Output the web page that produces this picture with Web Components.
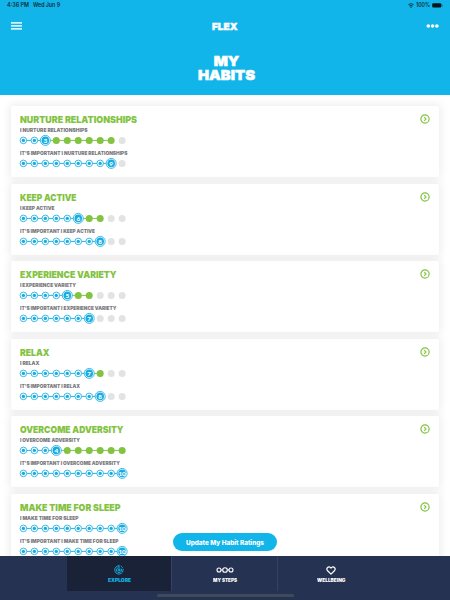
<!DOCTYPE html>
<html lang="en">
<head>
<meta charset="utf-8">
<title>My Habits</title>
<style>
  html, body { margin: 0; height: 100%; overflow: hidden; }
  body { font-family: Inter, "Liberation Sans", sans-serif; background: #fff; }
</style>
</head>
<body>
<habits-app></habits-app>

<script>
/**
 * FitText
 * - Stretches or condenses its text to `width` pixels
 */
class FitText extends HTMLElement {
  constructor() {
    super();
    this.attachShadow({ mode: "open" });
    this.shadowRoot.innerHTML = `
      <style>
        :host { display: block; white-space: nowrap; }
        span { display: inline-block; transform-origin: 0 50%; vertical-align: top; }
      </style>
      <span><slot></slot></span>
    `;
  }

  connectedCallback() {
    const span = this.shadowRoot.querySelector("span");
    const width = Number(this.getAttribute("width"));
    const scale = width / span.getBoundingClientRect().width;
    span.style.transform = `scaleX(${scale})`;
    this.style.width = `${width}px`;
  }
}

/**
 * RatingTrack
 * - Attributes: `value` (numbered marker), `goal` (last green dot)
 */
class RatingTrack extends HTMLElement {
  constructor() {
    super();
    this.attachShadow({ mode: "open" });
  }

  connectedCallback() {
    const value = Number(this.getAttribute("value"));
    const goal = Number(this.getAttribute("goal") || value);
    const x = (n) => 6.4 + (n - 1) * 10.97;
    let dots = "";

    for (let n = 1; n <= 10; n++) {
      if (n < value) {
        dots += `<circle class="ring" cx="${x(n)}" cy="6.4" r="3.3"/><circle class="blue" cx="${x(n)}" cy="6.4" r="1.7"/>`;
      } else if (n === value) {
        dots += `
          <circle class="ring" cx="${x(n)}" cy="6.4" r="5"/>
          <circle class="blue" cx="${x(n)}" cy="6.4" r="3.8"/>
          <text x="${x(n)}" y="8.7">${n}</text>`;
      } else {
        dots += `<circle class="${n <= goal ? "green" : "grey"}" cx="${x(n)}" cy="6.4" r="3.5"/>`;
      }
    }

    this.shadowRoot.innerHTML = `
      <style>
        :host { display: block; height: 12px; margin-left: -3px; }
        svg { display: block; overflow: visible; }
        .ring { fill: #fff; stroke: #25b3e4; stroke-width: 0.9; }
        .blue { fill: #18ade2; }
        .green { fill: #82c341; }
        .grey { fill: #e3e3e3; }
        text { fill: #fff; font: 900 6.4px Lato, sans-serif; text-anchor: middle; }
      </style>
      <svg width="112" height="12">
        <path d="M${x(value)} 6.4H${x(goal)}" stroke="#82c341"/>
        <path d="M${x(1)} 6.4H${x(value)}" stroke="#25b3e4"/>
        ${dots}
      </svg>
    `;
  }
}

/**
 * HabitCard
 * - Title and arrow come from the card, the ratings are slotted in
 */
class HabitCard extends HTMLElement {
  constructor() {
    super();
    this.attachShadow({ mode: "open" });
  }

  connectedCallback() {
    this.shadowRoot.innerHTML = `
      <style>
        :host {
          display: flex;
          justify-content: space-between;
          box-sizing: border-box;
          height: 71px;
          flex-shrink: 0;
          padding: 7px 8.4px 0 9px;
          border-radius: 2px;
          background: #fff;
          box-shadow: 0 0 9px 2px rgba(0, 0, 0, 0.07);
        }
        .title {
          height: 12px;
          line-height: 13px;
          font-size: 9.6px;
          font-weight: 900;
          color: #82c341;
        }
        svg { display: block; margin-top: 0.8px; }
      </style>
      <div>
        <fit-text class="title" width="${this.getAttribute("width")}">${this.getAttribute("name")}</fit-text>
        <slot></slot>
      </div>
      <svg width="10" height="10" viewBox="0 0 10 10" fill="none" stroke="#82c341">
        <circle cx="5" cy="5" r="4.1" stroke-width="1.2"/>
        <path d="M4.2 3.2L6 5L4.2 6.8" stroke-width="1.1"/>
      </svg>
    `;
  }
}

class HabitRating extends HTMLElement {
  constructor() {
    super();
    this.attachShadow({ mode: "open" });
  }

  connectedCallback() {
    this.shadowRoot.innerHTML = `
      <style>
        :host { display: block; height: 22.8px; }
        .label {
          height: 9.2px;
          line-height: 10.4px;
          font-size: 5.3px;
          font-weight: 900;
          color: #7b7b7e;
        }
      </style>
      <fit-text class="label" width="${this.getAttribute("width")}">${this.getAttribute("label")}</fit-text>
      <rating-track value="${this.getAttribute("value")}" goal="${this.getAttribute("goal")}"></rating-track>
    `;
  }
}

class StatusBar extends HTMLElement {
  constructor() {
    super();
    this.attachShadow({ mode: "open" });
    this.shadowRoot.innerHTML = `
      <style>
        :host {
          display: flex;
          justify-content: space-between;
          height: 11px;
          padding: 0 7.5px 0 7px;
          font: 600 5.5px/11px Inter, sans-serif;
          color: #0c2d3a;
        }
        div { display: flex; align-items: center; }
        .left { gap: 4px; }
        .right { gap: 2px; }
      </style>
      <div class="left"><fit-text width="22">4:36 PM</fit-text><fit-text width="27">Wed Jun 9</fit-text></div>
      <div class="right">
        <svg width="6" height="5" viewBox="0 0 6 5" fill="none" stroke="#0c2d3a" stroke-width="0.9">
          <path d="M0.4 1.7Q3 -0.5 5.6 1.7M1.4 3Q3 1.6 4.6 3"/>
          <circle cx="3" cy="4.1" r="0.35"/>
        </svg>
        <fit-text width="14">100%</fit-text>
        <svg width="11" height="5" viewBox="0 0 11 5" fill="#06151c">
          <rect x="0.2" y="0.3" width="9" height="4.3" rx="1"/>
          <rect x="9.7" y="1.5" width="0.6" height="2" rx="0.3"/>
        </svg>
      </div>
    `;
  }
}

class PageHeader extends HTMLElement {
  constructor() {
    super();
    this.attachShadow({ mode: "open" });
    this.shadowRoot.innerHTML = `
      <style>
        :host { display: block; height: 95.3px; flex-shrink: 0; background: #12b5ea; color: #fff; font-weight: 900; }
        .bar {
          display: flex;
          align-items: center;
          justify-content: space-between;
          height: 30px;
          padding: 0 11px;
        }
        .brand { font-size: 9.6px; -webkit-text-stroke: 0.4px #fff; }
        h1 {
          display: flex;
          justify-content: center;
          margin: 14px 0 0;
          font-size: 13.8px;
          font-weight: 900;
          line-height: 13.6px;
          text-align: center;
          -webkit-text-stroke: 0.5px #fff;
        }
        svg { display: block; }
      </style>
      <status-bar></status-bar>
      <div class="bar">
        <svg width="12" height="8" fill="#fff">
          <rect y="0.2" width="11" height="1.4"/><rect y="3.2" width="11" height="1.4"/><rect y="6.2" width="11" height="1.4"/>
        </svg>
        <fit-text class="brand" width="25.5">FLEX</fit-text>
        <svg width="13" height="4" fill="#fff">
          <circle cx="2.3" cy="2" r="1.8"/><circle cx="6.6" cy="2" r="1.8"/><circle cx="10.9" cy="2" r="1.8"/>
        </svg>
      </div>
      <h1><fit-text width="57">MY<br>HABITS</fit-text></h1>
    `;
  }
}

class TabItem extends HTMLElement {
  constructor() {
    super();
    this.attachShadow({ mode: "open" });
    this.shadowRoot.innerHTML = `
      <style>
        :host {
          display: flex;
          flex-direction: column;
          align-items: center;
          box-sizing: border-box;
          width: 105.6px;
          height: 35px;
          padding-top: 9px;
          color: #fff;
          font-size: 4.9px;
          font-weight: 900;
          line-height: 6px;
          border-right: 1px solid #34415f;
        }
        :host(:last-child) { border-right: 0; }
        :host([active]) { background: #1a2237; color: #13b3e8; }
        .icon { display: flex; align-items: center; height: 10px; margin-bottom: 2.4px; }
      </style>
      <div class="icon"><slot name="icon"></slot></div>
      <slot></slot>
    `;
  }
}

class TabBar extends HTMLElement {
  constructor() {
    super();
    this.attachShadow({ mode: "open" });
    this.shadowRoot.innerHTML = `
      <style>
        :host { display: flex; flex-direction: column; align-items: center; height: 44px; flex-shrink: 0; background: #253252; }
        .tabs { display: flex; margin-left: 0.4px; }
        .home { width: 137px; height: 2.4px; margin-top: 3.2px; border-radius: 2px; background: #404b59; }
        svg { display: block; fill: none; stroke: currentColor; }
      </style>
      <div class="tabs">
        <tab-item active>
          <svg slot="icon" width="10" height="10" viewBox="0 0 10 10" stroke-width="0.9" stroke-linecap="round">
            <path d="M5 0.7A4.2 4.2 0 1 0 9.1 4.2M8.5 2.5A4.2 4.2 0 0 0 7 1.2"/>
            <path d="M4 2.6A2.6 2.6 0 1 0 7.3 3.8M5 0.7V4.5"/>
            <circle cx="5" cy="5.2" r="0.9"/>
          </svg>
          <fit-text width="23">EXPLORE</fit-text>
        </tab-item>
        <tab-item>
          <svg slot="icon" width="18" height="6" viewBox="0 0 18 6" stroke-width="1.1">
            <circle cx="3" cy="3" r="2"/><circle cx="9" cy="3" r="2.3"/><circle cx="15" cy="3" r="2"/>
            <path d="M5 3H6.7M11.3 3H13"/>
          </svg>
          <fit-text width="24">MY STEPS</fit-text>
        </tab-item>
        <tab-item>
          <svg slot="icon" width="10" height="9" viewBox="0 0 10 9" stroke-width="1.2" stroke-linejoin="round">
            <path d="M5 8.1L1.6 4.8C-0.4 2.5 2.6 -0.9 5 2C7.4 -0.9 10.4 2.5 8.4 4.8Z"/>
          </svg>
          <fit-text width="28.5">WELLBEING</fit-text>
        </tab-item>
      </div>
      <div class="home"></div>
    `;
  }
}

const habits = [
  { name: "Nurture Relationships", value: 3, goal: 9, widths: [117, 67.5, 107.5] },
  { name: "Keep Active", value: 6, goal: 8, widths: [56.5, 34.5, 75] },
  { name: "Experience Variety", value: 5, goal: 7, widths: [96.5, 56, 96.5] },
  { name: "Relax", value: 7, goal: 8, widths: [29.5, 19.5, 60] },
  { name: "Overcome Adversity", value: 4, goal: 10, widths: [103.5, 60, 100] },
  { name: "Make Time For Sleep", value: 10, goal: 10, widths: [100.5, 58.5, 98.5] },
];

class HabitsApp extends HTMLElement {
  constructor() {
    super();
    this.attachShadow({ mode: "open" });
  }

  connectedCallback() {
    const cards = habits.map((habit) => {
      const name = habit.name.toUpperCase();
      return `
        <habit-card name="${name}" width="${habit.widths[0]}">
          <habit-rating label="I ${name}" width="${habit.widths[1]}" value="${habit.value}" goal="${habit.goal}"></habit-rating>
          <habit-rating label="IT'S IMPORTANT I ${name}" width="${habit.widths[2]}" value="${habit.goal}" goal="${habit.goal}"></habit-rating>
        </habit-card>`;
    }).join("");

    this.shadowRoot.innerHTML = `
      <style>
        :host { position: relative; display: flex; flex-direction: column; width: 450px; height: 600px; overflow: hidden; }
        main {
          display: flex;
          flex-direction: column;
          flex: 1;
          min-height: 0;
          box-sizing: border-box;
          gap: 6.5px;
          padding: 11px 11.5px 0 11px;
          overflow: hidden;
        }
        /* floats over the list */
        button {
          position: absolute;
          left: 173px;
          bottom: 48.7px;
          display: flex;
          align-items: center;
          justify-content: center;
          width: 104px;
          height: 18.3px;
          padding: 0;
          border: 0;
          border-radius: 10px;
          background: #12b5ea;
          color: #fff;
          font: 800 6.8px Inter, sans-serif;
        }
      </style>
      <page-header></page-header>
      <main>${cards}</main>
      <button><fit-text width="78">Update My Habit Ratings</fit-text></button>
      <tab-bar></tab-bar>
    `;
  }
}

customElements.define("fit-text", FitText);
customElements.define("rating-track", RatingTrack);
customElements.define("habit-rating", HabitRating);
customElements.define("habit-card", HabitCard);
customElements.define("status-bar", StatusBar);
customElements.define("page-header", PageHeader);
customElements.define("tab-item", TabItem);
customElements.define("tab-bar", TabBar);
customElements.define("habits-app", HabitsApp);
</script>
</body>
</html>
